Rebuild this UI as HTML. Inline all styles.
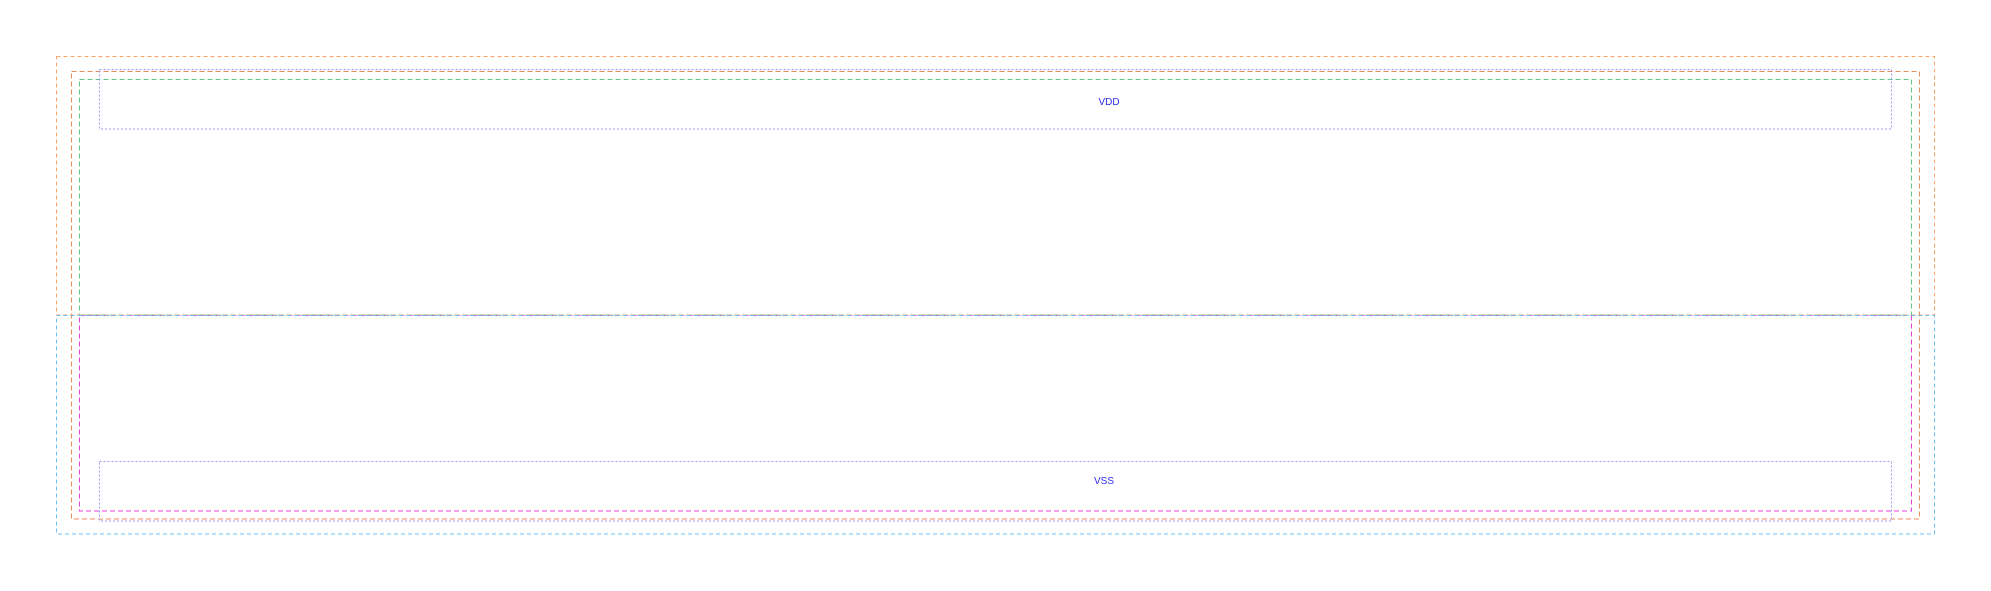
<!DOCTYPE html>
<html><head><meta charset="utf-8"><style>
html,body{margin:0;padding:0;background:#fff;width:1991px;height:591px;overflow:hidden}
svg{display:block}
text{font-family:"Liberation Sans",sans-serif;font-size:10px;fill:#2b2bf0}
</style></head><body>
<svg width="1991" height="591" viewBox="0 0 1991 591" xmlns="http://www.w3.org/2000/svg">
<g fill="none" stroke-width="1">
<rect x="79.5" y="315.5" width="1832" height="195.5" stroke="#e540e5" stroke-dasharray="5,3"/>
<rect x="71.5" y="71.5" width="1848" height="447.5" stroke="#f08a5a" stroke-dasharray="5,3"/>
<rect x="79.5" y="79.5" width="1832" height="235.5" stroke="#5cc88a" stroke-dasharray="5,3"/>
<rect x="56.5" y="56.5" width="1878" height="258.5" stroke="#f9a46a" stroke-dasharray="4,3"/>
<rect x="56.5" y="315.5" width="1878" height="218.5" stroke="#6cc0f5" stroke-dasharray="4,3"/>
<rect x="99.5" y="69.5" width="1792" height="59.5" stroke="#9a9af5" stroke-dasharray="2,2"/>
<rect x="99.5" y="461.5" width="1792" height="59.5" stroke="#9a9af5" stroke-dasharray="2,2"/>
</g>
<text x="1109" y="105" text-anchor="middle">VDD</text>
<text x="1104" y="484" text-anchor="middle">VSS</text>
</svg>
</body></html>
